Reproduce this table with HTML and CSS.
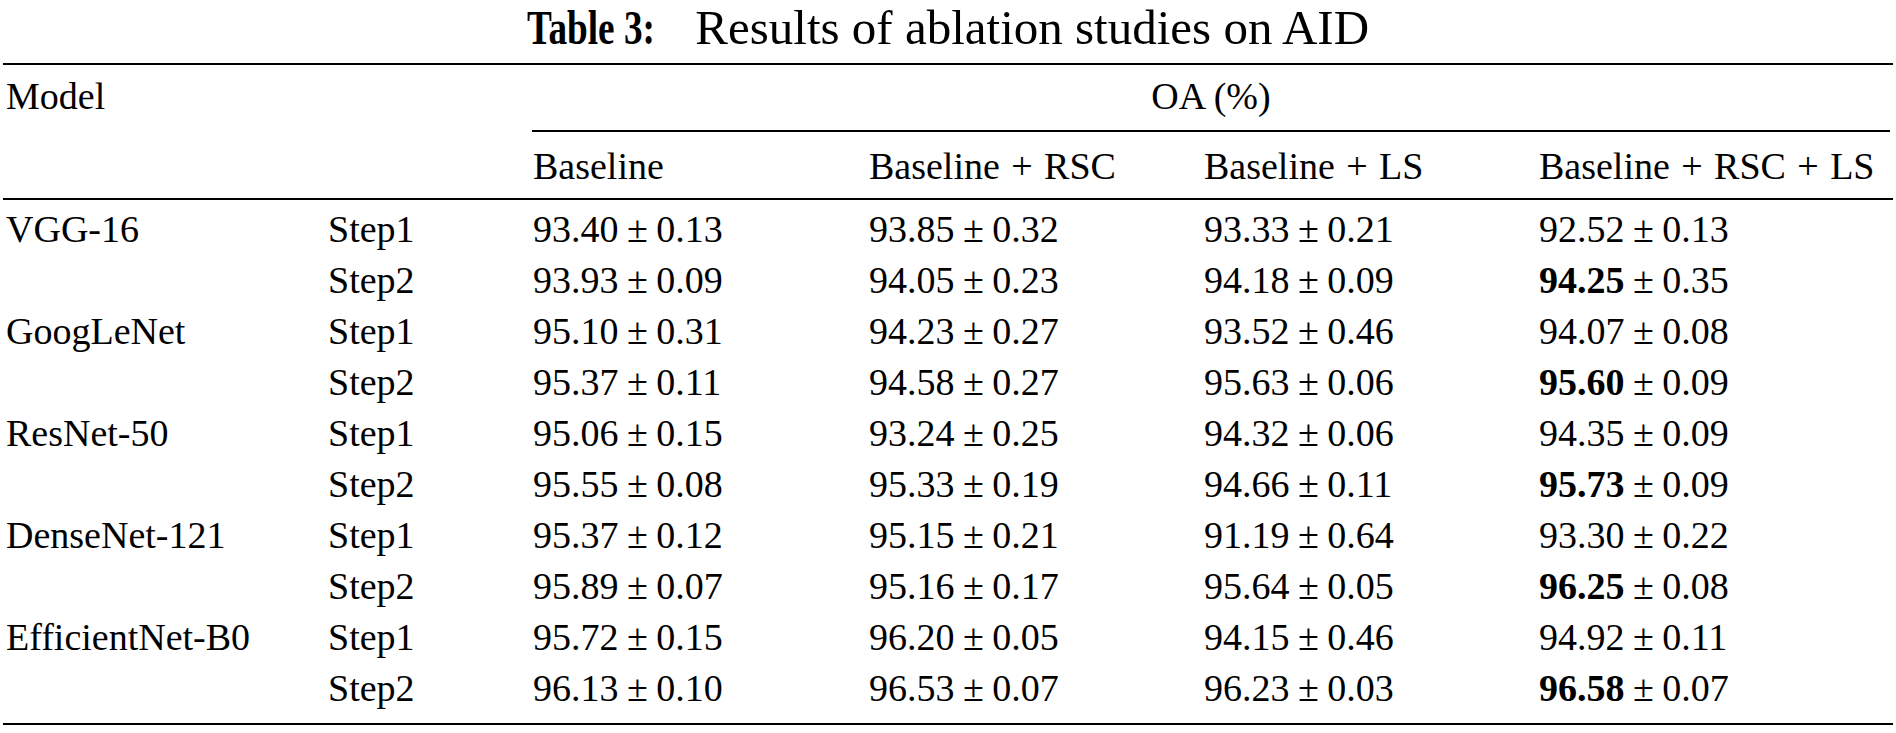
FILE: index.html
```html
<!DOCTYPE html>
<html lang="en">
<head>
<meta charset="utf-8">
<title>Table 3: Results of ablation studies on AID</title>
<link rel="stylesheet" href="styles.css">
</head>
<body>
<div class="page">
  <div class="caption"><span class="cap-label">Table 3:</span><span class="cap-text">Results of ablation studies on AID</span></div>
  <div class="table">
    <div class="head1">
      <div class="cell">Model</div>
      <div class="cell"></div>
      <div class="cell oa">OA (%)</div>
    </div>
    <div class="head2">
      <div class="cell"></div>
      <div class="cell"></div>
      <div class="cell">Baseline</div>
      <div class="cell">Baseline<span class="op">+</span>RSC</div>
      <div class="cell">Baseline<span class="op">+</span>LS</div>
      <div class="cell">Baseline<span class="op">+</span>RSC<span class="op">+</span>LS</div>
    </div>
    <div class="body">
      <div class="row">
        <div class="cell">VGG-16</div><div class="cell">Step1</div>
        <div class="cell">93.40<span class="pm">±</span>0.13</div>
        <div class="cell">93.85<span class="pm">±</span>0.32</div>
        <div class="cell">93.33<span class="pm">±</span>0.21</div>
        <div class="cell">92.52<span class="pm">±</span>0.13</div>
      </div>
      <div class="row">
        <div class="cell"></div><div class="cell">Step2</div>
        <div class="cell">93.93<span class="pm">±</span>0.09</div>
        <div class="cell">94.05<span class="pm">±</span>0.23</div>
        <div class="cell">94.18<span class="pm">±</span>0.09</div>
        <div class="cell"><b>94.25</b><span class="pm">±</span>0.35</div>
      </div>
      <div class="row">
        <div class="cell">GoogLeNet</div><div class="cell">Step1</div>
        <div class="cell">95.10<span class="pm">±</span>0.31</div>
        <div class="cell">94.23<span class="pm">±</span>0.27</div>
        <div class="cell">93.52<span class="pm">±</span>0.46</div>
        <div class="cell">94.07<span class="pm">±</span>0.08</div>
      </div>
      <div class="row">
        <div class="cell"></div><div class="cell">Step2</div>
        <div class="cell">95.37<span class="pm">±</span>0.11</div>
        <div class="cell">94.58<span class="pm">±</span>0.27</div>
        <div class="cell">95.63<span class="pm">±</span>0.06</div>
        <div class="cell"><b>95.60</b><span class="pm">±</span>0.09</div>
      </div>
      <div class="row">
        <div class="cell">ResNet-50</div><div class="cell">Step1</div>
        <div class="cell">95.06<span class="pm">±</span>0.15</div>
        <div class="cell">93.24<span class="pm">±</span>0.25</div>
        <div class="cell">94.32<span class="pm">±</span>0.06</div>
        <div class="cell">94.35<span class="pm">±</span>0.09</div>
      </div>
      <div class="row">
        <div class="cell"></div><div class="cell">Step2</div>
        <div class="cell">95.55<span class="pm">±</span>0.08</div>
        <div class="cell">95.33<span class="pm">±</span>0.19</div>
        <div class="cell">94.66<span class="pm">±</span>0.11</div>
        <div class="cell"><b>95.73</b><span class="pm">±</span>0.09</div>
      </div>
      <div class="row">
        <div class="cell">DenseNet-121</div><div class="cell">Step1</div>
        <div class="cell">95.37<span class="pm">±</span>0.12</div>
        <div class="cell">95.15<span class="pm">±</span>0.21</div>
        <div class="cell">91.19<span class="pm">±</span>0.64</div>
        <div class="cell">93.30<span class="pm">±</span>0.22</div>
      </div>
      <div class="row">
        <div class="cell"></div><div class="cell">Step2</div>
        <div class="cell">95.89<span class="pm">±</span>0.07</div>
        <div class="cell">95.16<span class="pm">±</span>0.17</div>
        <div class="cell">95.64<span class="pm">±</span>0.05</div>
        <div class="cell"><b>96.25</b><span class="pm">±</span>0.08</div>
      </div>
      <div class="row">
        <div class="cell">EfficientNet-B0</div><div class="cell">Step1</div>
        <div class="cell">95.72<span class="pm">±</span>0.15</div>
        <div class="cell">96.20<span class="pm">±</span>0.05</div>
        <div class="cell">94.15<span class="pm">±</span>0.46</div>
        <div class="cell">94.92<span class="pm">±</span>0.11</div>
      </div>
      <div class="row">
        <div class="cell"></div><div class="cell">Step2</div>
        <div class="cell">96.13<span class="pm">±</span>0.10</div>
        <div class="cell">96.53<span class="pm">±</span>0.07</div>
        <div class="cell">96.23<span class="pm">±</span>0.03</div>
        <div class="cell"><b>96.58</b><span class="pm">±</span>0.07</div>
      </div>
    </div>
  </div>
</div>
</body>
</html>
```
FILE: styles.css
```css
html, body {
  margin: 0;
  padding: 0;
  background: #ffffff;
}

body {
  font-family: "Liberation Serif", "Times New Roman", serif;
  color: #000000;
}

.page {
  width: 1896px;
}

.caption {
  text-align: center;
  font-size: 49px;
  line-height: 55px;
  margin-bottom: 8px;
  white-space: nowrap;
}

.cap-label {
  display: inline-block;
  font-weight: bold;
  transform: scaleX(0.76);
  transform-origin: left center;
}

.table {
  margin-left: 3px;
  width: 1890px;
  border-top: 2px solid #000;
  border-bottom: 2px solid #000;
  font-size: 38px;
  line-height: 51px;
}

.head1,
.head2,
.row {
  display: grid;
  grid-template-columns: 322px 205px 336px 335px 335px 1fr;
  align-items: start;
}

.head1 {
  padding-top: 6px;
}

.head2 {
  padding-top: 9px;
  padding-bottom: 6px;
  border-bottom: 2px solid #000;
}

.body {
  padding-top: 4px;
  padding-bottom: 9px;
}

.cell {
  padding-left: 3px;
  white-space: nowrap;
  height: 51px;
}

.oa {
  grid-column: 3 / 7;
  margin-left: 2px;
  margin-right: 3px;
  padding-left: 0;
  padding-bottom: 8px;
  border-bottom: 2px solid #000;
  text-align: center;
}

.op {
  margin: 0 0.3em;
}

.pm {
  margin: 0 0.222em;
}

b {
  font-weight: bold;
}
```
